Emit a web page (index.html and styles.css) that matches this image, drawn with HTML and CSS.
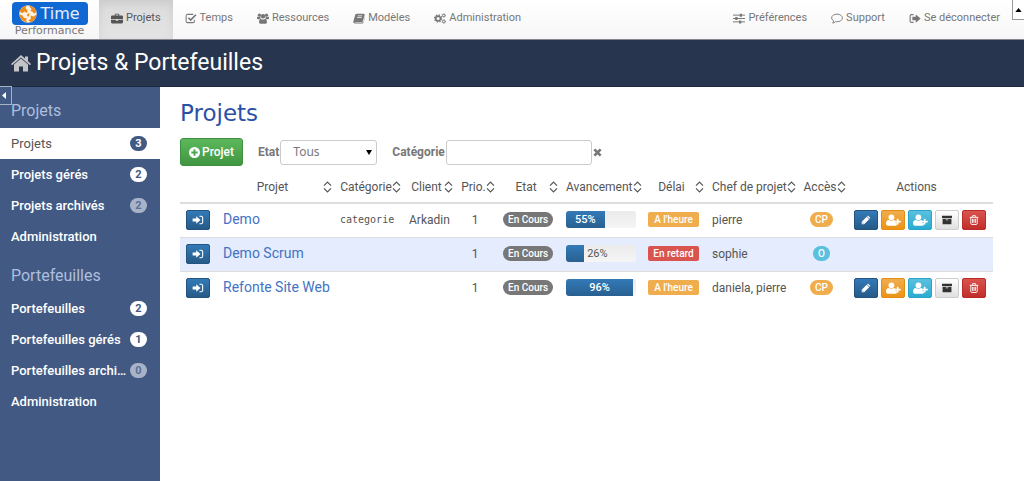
FILE: index.html
```
<!DOCTYPE html>
<html lang="fr">
<head>
<meta charset="utf-8">
<title>Time Performance - Projets &amp; Portefeuilles</title>
<link rel="stylesheet" href="styles.css">
</head>
<body>
<svg class="sprite" aria-hidden="true">
  <symbol id="briefcase" viewBox="0 0 16 14"><path d="M5 3V1.500Q5 .5 6 .5H10Q11 .5 11 1.500V3H14.500Q16 3 16 4.500V7.500H0V4.500Q0 3 1.500 3ZM6.300 3H9.700V1.800H6.300ZM0 8.500H6.500V10H9.500V8.500H16V12Q16 13.500 14.500 13.500H1.500Q0 13.500 0 12Z"/></symbol>
  <symbol id="check" viewBox="0 0 16 14"><path d="M11 1.500H3.500Q1.500 1.500 1.500 3.500V10.500Q1.500 12.500 3.500 12.500H10.500Q12.500 12.500 12.500 10.500V8.500" fill="none" stroke="currentColor" stroke-width="1.400"/><path d="M4.500 6L7.500 9L14.500 2" fill="none" stroke="currentColor" stroke-width="2.300"/></symbol>
  <symbol id="users" viewBox="0 0 16 14"><circle cx="3.200" cy="2.500" r="2.100"/><circle cx="12.800" cy="2.500" r="2.100"/><circle cx="8" cy="4" r="3"/><path d="M0 5.500Q0 4.500 1 4.800Q2.500 5.500 4.200 4.800Q4.200 6.500 5 7.200Q3.600 7.200 3 8H1.500Q0 8 0 6.500ZM16 5.500Q16 4.500 15 4.800Q13.500 5.500 11.800 4.800Q11.800 6.500 11 7.200Q12.400 7.200 13 8H14.500Q16 8 16 6.500ZM2.700 11.500Q2.700 7.500 5 7.200Q8 9.500 11 7.200Q13.300 7.500 13.300 11.500Q13.300 14 11 14H5Q2.700 14 2.700 11.500Z"/></symbol>
  <symbol id="book" viewBox="0 0 16 14"><path d="M5.500 .5H14Q16 .7 15.500 2.500L13 11Q12.700 12 11.500 12H3Q2.300 12 2.300 12.500H12Q13.500 12.500 14 11L16 4.500Q16.300 5.300 16 6L13.800 12.500Q13.400 13.800 12 13.800H2.500Q0 13.500 .5 11L3 2Q3.500 .6 5.500 .5ZM6.300 3L6 4H12.200L12.500 3ZM5.600 5.300L5.300 6.300H11.500L11.800 5.300Z" fill-rule="evenodd"/></symbol>
  <symbol id="cogs" viewBox="0 0 16 14"><circle cx="5.500" cy="7" r="3.200" fill="none" stroke="currentColor" stroke-width="2.200"/><circle cx="5.500" cy="7" r="4.800" fill="none" stroke="currentColor" stroke-width="1.600" stroke-dasharray="1.900 1.870"/><circle cx="13" cy="3" r="1.600" fill="none" stroke="currentColor" stroke-width="1.300"/><circle cx="13" cy="3" r="2.500" fill="none" stroke="currentColor" stroke-dasharray="1.300 1.300"/><circle cx="13" cy="11" r="1.600" fill="none" stroke="currentColor" stroke-width="1.300"/><circle cx="13" cy="11" r="2.500" fill="none" stroke="currentColor" stroke-dasharray="1.300 1.300"/></symbol>
  <symbol id="sliders" viewBox="0 0 16 14"><path d="M0 2.500H16M0 7H16M0 11.500H16" stroke="currentColor" stroke-width="1.300"/><path d="M9 .5H12V4.500H9ZM3 5H6V9H3ZM8 9.500H11V13.500H8Z"/></symbol>
  <symbol id="comment" viewBox="0 0 16 14"><path d="M8 1.200C12 1.200 15.200 3.400 15.200 6.300S12 11.300 8 11.300Q7 11.300 6.200 11.100Q4.500 12.800 2.200 13.100Q3.500 11.800 3.600 10.200Q.8 8.700 .8 6.300C.8 3.400 4 1.200 8 1.200Z" fill="none" stroke="currentColor" stroke-width="1.200"/></symbol>
  <symbol id="signout" viewBox="0 0 16 14"><path d="M6 1.800H3.500Q1.500 1.800 1.500 3.800V10.200Q1.500 12.200 3.500 12.200H6" fill="none" stroke="currentColor" stroke-width="1.500"/><path d="M4.500 4.700H9V1.500L15.500 7L9 12.500V9.300H4.500Z"/></symbol>
  <symbol id="signin" viewBox="0 0 16 14"><path d="M10 1.800H12.500Q14.500 1.800 14.500 3.800V10.200Q14.500 12.200 12.500 12.200H10" fill="none" stroke="currentColor" stroke-width="1.500"/><path d="M.5 4.900H5.500V1.700L11.500 7L5.500 12.300V9.100H.5Z"/></symbol>
  <symbol id="home" viewBox="0 0 20 17"><path d="M10 0L14 3.500V1.500H17V6.200L20 9L18.900 10.200L10 2.500L1.100 10.200L0 9ZM10 3.500L17 9.500V16.500H12V11.500H8V16.500H3V9.500Z"/></symbol>
  <symbol id="plus" viewBox="0 0 14 14"><path d="M7 0A7 7 0 1 0 7 14A7 7 0 1 0 7 0ZM5.800 3H8.200V5.800H11V8.200H8.200V11H5.800V8.200H3V5.800H5.800Z" fill-rule="evenodd"/></symbol>
  <symbol id="times" viewBox="0 0 10 10"><path d="M1.500 1.500L8.500 8.500M8.500 1.500L1.500 8.500" stroke="currentColor" stroke-width="3"/></symbol>
  <symbol id="sort" viewBox="0 0 9 12"><path d="M1 4.700L4.500 1.200L8 4.700M1 7.300L4.500 10.800L8 7.300" fill="none" stroke="#555" stroke-width="1.200"/></symbol>
  <symbol id="pencil" viewBox="0 0 14 14"><path d="M9.800 .8L13.200 4.200L12 5.400L8.600 2ZM8 2.600L11.400 6L4.400 13H1V9.600ZM2.200 10.200V11.800H3.800Z" fill-rule="evenodd"/></symbol>
  <symbol id="adduser" viewBox="0 0 18 14"><circle cx="6.500" cy="3.800" r="3.500"/><path d="M0 11.500Q0 7 3.500 7Q6.500 9 9.500 7Q10.500 7 11 7.500V10.500H13V13Q12.500 13.800 11.500 13.800H2Q0 13.500 0 11.500Z"/><path d="M13 5.500H15V8H17.700V10H15V12.500H13V10H10.500V8H13Z"/></symbol>
  <symbol id="archive" viewBox="0 0 14 14"><path d="M0 1H14V4.300H0ZM.8 5.300H13.200V13H.8ZM5.200 6.300V7.500H8.800V6.300Z" fill-rule="evenodd"/></symbol>
  <symbol id="trash" viewBox="0 0 14 14"><path d="M1 3.300H13M4.500 3L5 1H9L9.500 3M2.500 3.500V11.500Q2.500 13.200 4 13.200H10Q11.500 13.200 11.500 11.500V3.500M5 5.500V11M7 5.500V11M9 5.500V11" fill="none" stroke="currentColor" stroke-width="1.300"/></symbol>
</svg>

<header class="topbar">
  <a class="logo" href="#" aria-label="Time Performance">
    <span class="logo-mark">
      <svg class="logo-ball" viewBox="0 0 18 18"><circle cx="9" cy="9" r="8.700" fill="#fdf0de"/><path d="M.8 6Q2.500 1.500 7.500 .5L6.500 3L8.500 5.500L8 8L5.500 6.500L3.500 8Q1.500 8 .8 6ZM9.500 .5Q15.500 1 17.400 7L15 8.500Q14 6 11.500 6L12.500 4ZM17.500 9.500Q17 15 12 17.200L9.500 15.500L12 13.500L11.500 10.500L14.500 11.500ZM.6 9.500L3.500 10.500L5 13L8 13.500L7 15.500L8.500 17.400Q1.500 16.500 .6 9.500ZM8.500 9L10.500 8L10 11.500L8 11Z" fill="#ec8a1c"/></svg>
      <span class="logo-time">Time</span>
    </span>
    <span class="logo-sub">Performance</span>
  </a>
  <nav class="nav" aria-label="Principale">
    <a class="active" href="#"><svg class="ico"><use href="#briefcase"/></svg>Projets</a>
    <a href="#"><svg class="ico"><use href="#check"/></svg>Temps</a>
    <a href="#"><svg class="ico"><use href="#users"/></svg>Ressources</a>
    <a href="#"><svg class="ico"><use href="#book"/></svg>Modèles</a>
    <a href="#"><svg class="ico"><use href="#cogs"/></svg>Administration</a>
  </nav>
  <nav class="nav nav-right" aria-label="Compte">
    <a href="#"><svg class="ico"><use href="#sliders"/></svg>Préférences</a>
    <a href="#"><svg class="ico"><use href="#comment"/></svg>Support</a>
    <a href="#"><svg class="ico"><use href="#signout"/></svg>Se déconnecter</a>
  </nav>
  <button class="fold-top" aria-label="Replier la barre"><svg viewBox="0 0 8 5"><path d="M0 5L4 0L8 5Z"/></svg></button>
</header>

<div class="titlebar">
  <svg class="home"><use href="#home"/></svg>
  <h1>Projets &amp; Portefeuilles</h1>
</div>

<div class="page">
  <aside class="sidebar">
    <button class="fold-side" aria-label="Replier le menu"><svg viewBox="0 0 4 7"><path d="M4 0L0 3.500L4 7Z"/></svg></button>
    <h2>Projets</h2>
    <a class="item current" href="#"><span>Projets</span><b class="count">3</b></a>
    <a class="item" href="#"><span>Projets gérés</span><b class="count">2</b></a>
    <a class="item" href="#"><span>Projets archivés</span><b class="count dim">2</b></a>
    <a class="item" href="#"><span>Administration</span></a>
    <h2 class="second">Portefeuilles</h2>
    <a class="item" href="#"><span>Portefeuilles</span><b class="count">2</b></a>
    <a class="item" href="#"><span>Portefeuilles gérés</span><b class="count">1</b></a>
    <a class="item" href="#"><span>Portefeuilles archi…</span><b class="count dim">0</b></a>
    <a class="item" href="#"><span>Administration</span></a>
  </aside>

  <main class="content">
    <h2>Projets</h2>
    <form class="filters">
      <button type="button" class="new"><svg><use href="#plus"/></svg>Projet</button>
      <div class="field">
        <label for="etat">Etat</label>
        <span class="select"><select id="etat"><option>Tous</option></select></span>
      </div>
      <div class="field">
        <label for="categorie">Catégorie</label>
        <input id="categorie" type="text">
        <button type="button" class="clear" aria-label="Effacer"><svg><use href="#times"/></svg></button>
      </div>
    </form>

    <table class="projects">
      <colgroup><col class="c-open"><col><col class="c-cat"><col class="c-client"><col class="c-prio"><col class="c-etat"><col class="c-av"><col class="c-delai"><col class="c-chef"><col class="c-acces"><col class="c-actions"></colgroup>
      <thead>
        <tr>
          <th></th>
          <th><div class="sort"><span>Projet</span><svg><use href="#sort"/></svg></div></th>
          <th><div class="sort"><span>Catégorie</span><svg><use href="#sort"/></svg></div></th>
          <th><div class="sort"><span>Client</span><svg><use href="#sort"/></svg></div></th>
          <th><div class="sort"><span>Prio.</span><svg><use href="#sort"/></svg></div></th>
          <th><div class="sort"><span>Etat</span><svg><use href="#sort"/></svg></div></th>
          <th><div class="sort"><span>Avancement</span><svg><use href="#sort"/></svg></div></th>
          <th><div class="sort"><span>Délai</span><svg><use href="#sort"/></svg></div></th>
          <th><div class="sort"><span>Chef de projet</span><svg><use href="#sort"/></svg></div></th>
          <th><div class="sort"><span>Accès</span><svg><use href="#sort"/></svg></div></th>
          <th class="actions-head">Actions</th>
        </tr>
      </thead>
      <tbody>
        <tr>
          <td class="open"><button class="btn blue" aria-label="Ouvrir"><svg><use href="#signin"/></svg></button></td>
          <td><a href="#">Demo</a></td>
          <td class="mono">categorie</td>
          <td>Arkadin</td>
          <td class="prio">1</td>
          <td><span class="badge grey">En Cours</span></td>
          <td><div class="progress"><div class="bar" style="width:55%">55%</div></div></td>
          <td><span class="label orange">A l'heure</span></td>
          <td>pierre</td>
          <td class="access"><span class="badge orange">CP</span></td>
          <td><div class="actions"><button class="btn blue" aria-label="Modifier"><svg><use href="#pencil"/></svg></button><button class="btn amber" aria-label="Ajouter un chef de projet"><svg><use href="#adduser"/></svg></button><button class="btn cyan" aria-label="Ajouter un observateur"><svg><use href="#adduser"/></svg></button><button class="btn light" aria-label="Archiver"><svg><use href="#archive"/></svg></button><button class="btn red" aria-label="Supprimer"><svg><use href="#trash"/></svg></button></div></td>
        </tr>
        <tr class="hover">
          <td class="open"><button class="btn blue" aria-label="Ouvrir"><svg><use href="#signin"/></svg></button></td>
          <td><a href="#">Demo Scrum</a></td>
          <td></td>
          <td></td>
          <td class="prio">1</td>
          <td><span class="badge grey">En Cours</span></td>
          <td><div class="progress"><div class="bar" style="width:26%"></div><span class="rest">26%</span></div></td>
          <td><span class="label crimson">En retard</span></td>
          <td>sophie</td>
          <td class="access"><span class="badge sky">O</span></td>
          <td></td>
        </tr>
        <tr>
          <td class="open"><button class="btn blue" aria-label="Ouvrir"><svg><use href="#signin"/></svg></button></td>
          <td><a href="#">Refonte Site Web</a></td>
          <td></td>
          <td></td>
          <td class="prio">1</td>
          <td><span class="badge grey">En Cours</span></td>
          <td><div class="progress"><div class="bar" style="width:96%">96%</div></div></td>
          <td><span class="label orange">A l'heure</span></td>
          <td>daniela, pierre</td>
          <td class="access"><span class="badge orange">CP</span></td>
          <td><div class="actions"><button class="btn blue" aria-label="Modifier"><svg><use href="#pencil"/></svg></button><button class="btn amber" aria-label="Ajouter un chef de projet"><svg><use href="#adduser"/></svg></button><button class="btn cyan" aria-label="Ajouter un observateur"><svg><use href="#adduser"/></svg></button><button class="btn light" aria-label="Archiver"><svg><use href="#archive"/></svg></button><button class="btn red" aria-label="Supprimer"><svg><use href="#trash"/></svg></button></div></td>
        </tr>
      </tbody>
    </table>
  </main>
</div>
</body>
</html>
```
FILE: styles.css
```
* { box-sizing: border-box; }

body {
  margin: 0;
  min-height: 100vh;
  display: flex;
  flex-direction: column;
  font: 13px/18px Roboto, sans-serif;
  color: #555;
  background: #fff;
}

svg { fill: currentColor; flex: none; }
a { text-decoration: none; }
button, input, select { font: inherit; color: inherit; margin: 0; padding: 0; }
h1, h2 { margin: 0; font-weight: 400; }
.sprite { position: absolute; width: 0; height: 0; }

/* Top bar */
.topbar {
  position: relative;
  display: flex;
  height: 40px;
  padding-right: 12px;
  background: linear-gradient(#fff, #f6f6f6);
  border-bottom: 1px solid #85878f;
}
.logo {
  display: flex;
  flex-direction: column;
  align-items: center;
  width: 99px;
  padding-top: 2px;
  color: #777;
}
.logo-mark {
  display: flex;
  align-items: center;
  justify-content: center;
  gap: 3px;
  width: 76px;
  height: 23px;
  border-radius: 4px;
  background: #1068d2;
  color: #e4effc;
}
.logo-ball { width: 18px; height: 18px; }
.logo-time { font: 16px/22px "DejaVu Sans", sans-serif; }
.logo-sub { font: 11px/12px "DejaVu Sans", sans-serif; }

.nav { display: flex; }
.nav-right { margin-left: auto; }
.nav a {
  display: flex;
  align-items: center;
  gap: 3px;
  padding: 0 12px 3px;
  font-size: 11px;
  color: #777;
}
.nav a.active {
  color: #555;
  background: linear-gradient(#dbdbdb, #e4e4e4);
  box-shadow: inset 0 3px 9px rgba(0, 0, 0, .08);
}
.ico { width: 12px; height: 11px; }
.fold-top {
  position: absolute;
  top: 0;
  right: 0;
  width: 12px;
  height: 20px;
  background: #fff;
  border: 1px solid #999;
  border-width: 0 0 1px 1px;
  color: #000;
}
.fold-top svg { display: block; width: 7px; height: 4px; margin: 0 auto; }

/* Title bar */
.titlebar {
  display: flex;
  align-items: center;
  gap: 5px;
  height: 47px;
  padding: 0 11px;
  background: #27354f;
  border-bottom: 1px solid #1d2940;
  color: #fff;
}
.titlebar h1 { font-size: 23px; line-height: 30px; }
.home { width: 20px; height: 17px; color: #c5c5c8; }

/* Sidebar */
.page { display: flex; flex: 1; }
.sidebar {
  position: relative;
  flex: none;
  width: 160px;
  padding-top: 6px;
  background: #425983;
}
.fold-side {
  position: absolute;
  top: -1px;
  left: 0;
  width: 12px;
  height: 19px;
  background: #425983;
  border: 1px solid #a9b2c4;
  border-left: 0;
  color: #fff;
}
.fold-side svg { display: block; width: 4px; height: 7px; margin-left: 2px; }
.sidebar h2 {
  padding: 0 11px;
  font-size: 16px;
  line-height: 35px;
  color: #aebfdf;
}
.sidebar h2.second { margin-top: 6px; }
.item {
  display: flex;
  align-items: center;
  justify-content: space-between;
  gap: 1px;
  height: 31px;
  padding: 0 13px 0 11px;
  font-weight: 500;
  color: #fff;
}
.item span { white-space: nowrap; }
.item.current { background: #fff; color: #555; font-weight: 400; }
.count {
  flex: none;
  width: 17px;
  border-radius: 8px;
  background: #fff;
  color: #425983;
  font-size: 11px;
  line-height: 15px;
  text-align: center;
}
.current .count { background: #425983; color: #fff; }
.count.dim { background: #a9b3c8; color: #5a6f97; }

/* Content */
.content { flex: 1; min-width: 0; padding: 11px 31px 20px 20px; }
.content h2 {
  font: 23px/30px "DejaVu Sans", sans-serif;
  color: #2a52a4;
}
.filters { display: flex; align-items: center; margin-top: 10px; gap: 15px; }
.field { display: flex; align-items: center; }
.field label { margin-right: 1px; font-size: 12px; font-weight: 700; color: #777; }
.new {
  display: flex;
  align-items: center;
  gap: 2px;
  height: 28px;
  padding: 0 8px;
  border: 1px solid #3e8f3e;
  border-radius: 3px;
  background: linear-gradient(#5cb85c, #419641);
  color: #fff;
  font-size: 12px;
  font-weight: 500;
}
.new svg { width: 11px; height: 11px; }
.select { position: relative; }
.select::after {
  content: "";
  position: absolute;
  top: 10px;
  right: 5px;
  border: 3px solid transparent;
  border-top: 5px solid #000;
  border-bottom: 0;
  pointer-events: none;
}
.select select {
  display: block;
  appearance: none;
  width: 97px;
  height: 25px;
  padding: 0 12px;
  border: 1px solid #ccc;
  border-radius: 3px;
  background: #fff;
  color: #777;
  font: 12px/18px "Noto Sans", sans-serif;
}
.field input {
  width: 146px;
  height: 25px;
  border: 1px solid #ccc;
  border-radius: 3px;
  background: #fff;
}
.clear { margin-left: 1px; border: 0; background: none; color: #777; }
.clear svg { display: block; width: 9px; height: 9px; }

/* Project table */
.projects {
  width: 100%;
  margin-top: 5px;
  table-layout: fixed;
  border-collapse: collapse;
}
.c-open { width: 35px; }
.c-cat { width: 69px; }
.c-client { width: 52px; }
.c-prio { width: 42px; }
.c-etat { width: 63px; }
.c-av { width: 82px; }
.c-delai { width: 64px; }
.c-chef { width: 91px; }
.c-acces { width: 51px; }
.c-actions { width: 146px; }
.projects th {
  height: 32px;
  padding: 0 1px 0 7px;
  border-bottom: 2px solid #ddd;
  font-size: 12px;
  font-weight: 400;
  white-space: nowrap;
}
.projects th.actions-head { padding-right: 14px; }
.sort { display: flex; align-items: center; }
.sort span { flex: 1; }
.sort svg { width: 9px; height: 12px; }
.projects td {
  height: 34px;
  padding: 0 0 1px 7px;
  border-bottom: 1px solid #ddd;
  font-size: 12px;
  white-space: nowrap;
}
.projects tr:last-child td { border-bottom: 0; }
.projects td.open { padding-left: 6px; }
.projects td a { padding-left: 1px; font-size: 14px; color: #4373c4; }
.projects .mono { font-family: "DejaVu Sans Mono", monospace; font-size: 10px; }
.projects .prio { padding-left: 0; text-align: center; }
.projects .access { padding-left: 0; }
.access .badge { margin: 0 auto; }
.projects .hover td { background: #e4ecfd; }

.badge, .label {
  display: block;
  width: fit-content;
  border-radius: 8px;
  color: #fff;
  font-size: 10px;
  font-weight: 500;
  line-height: 15px;
}
.badge { padding: 0 5px; }
.label { width: 51px; border-radius: 2px; text-align: center; }
.grey { background: #777; }
.orange { background: #f0ad4e; }
.crimson { background: #d9534f; }
.sky { background: #5bc0de; }

.progress {
  display: flex;
  width: 70px;
  height: 17px;
  border-radius: 3px;
  overflow: hidden;
  background: linear-gradient(#ebebeb, #f5f5f5);
  font-size: 11px;
  line-height: 17px;
}
.bar {
  background: linear-gradient(#337ab7, #286090);
  color: #fff;
  font-weight: 500;
  text-align: center;
}
.rest { padding-left: 3px; }

.btn {
  display: flex;
  align-items: center;
  justify-content: center;
  width: 24px;
  height: 20px;
  border: 1px solid;
  border-radius: 2px;
  color: #fff;
}
.btn svg { width: 12px; height: 10px; }
.blue { background: linear-gradient(#337ab7, #265a88); border-color: #245580; }
.amber { background: linear-gradient(#f0ad4e, #eb9316); border-color: #e38d13; }
.cyan { background: linear-gradient(#5bc0de, #2aabd2); border-color: #28a4c9; }
.light { background: linear-gradient(#fff, #e0e0e0); border-color: #ccc; color: #333; }
.red { background: linear-gradient(#d9534f, #c12e2a); border-color: #b92c28; }
.amber svg, .cyan svg { width: 15px; height: 12px; }
.actions { display: flex; gap: 3px; }
```
